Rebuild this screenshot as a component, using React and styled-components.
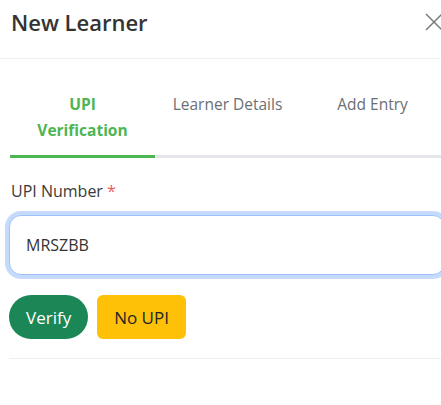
import React from "react";
import styled, { createGlobalStyle } from "styled-components";

const Global = createGlobalStyle`
  html, body { margin: 0; padding: 0; background: #fff; overflow: hidden; }
  body { font-family: "Open Sans", "Noto Sans", sans-serif; color: #333; }
  * { box-sizing: border-box; }
`;

const Modal = styled.div`
  width: 455px;
  background: #fff;
`;

const Header = styled.div`
  display: flex;
  align-items: flex-start;
  justify-content: space-between;
  height: 59px;
  padding: 7px 12px 0 11px;
  border-bottom: 1px solid #f1f1f1;
`;

const Title = styled.h1`
  margin: 0;
  font-size: 22px;
  line-height: 30px;
  font-weight: 600;
  color: #333;
`;

const Close = styled.button`
  display: flex;
  align-items: center;
  justify-content: center;
  width: 18px;
  height: 18px;
  margin-top: 6px;
  padding: 0;
  border: 0;
  background: transparent;
  color: #7a7a7a;
`;

const Body = styled.div`
  padding: 0 10px 0 9px;
`;

const Tabs = styled.div`
  display: flex;
  align-items: flex-start;
  margin-top: 32px;
  margin-left: 1px;
  border-bottom: 3px solid #e4e6ea;
`;

const Tab = styled.div`
  flex: 1;
  text-align: center;
  font-size: 15.5px;
  line-height: 26px;
  font-weight: ${(p) => (p.$active ? 700 : 400)};
  color: ${(p) => (p.$active ? "#4db552" : "#6b6f75")};
  padding-bottom: 12px;
  margin-bottom: -3px;
  border-bottom: 3px solid ${(p) => (p.$active ? "#4db552" : "transparent")};
`;

const Label = styled.label`
  display: block;
  margin-top: 21px;
  padding-left: 2px;
  font-size: 16px;
  line-height: 24px;
  color: #3a3a3a;
`;

const Req = styled.span`
  color: #ef5a5a;
`;

const Input = styled.input`
  display: block;
  width: 100%;
  height: 60px;
  margin-top: 12px;
  padding: 0 16px;
  font-family: "Open Sans", "Noto Sans", sans-serif;
  font-size: 16px;
  color: #333;
  border: 1px solid #9cc3fb;
  border-radius: 12px;
  box-shadow: 0 0 0 4px #c6dbfc;
  outline: none;
  background: #fff;
`;

const Actions = styled.div`
  display: flex;
  gap: 9px;
  margin-top: 20px;
  padding-bottom: 19px;
  border-bottom: 1px solid #f0f0f0;
`;

const Button = styled.button`
  height: 44px;
  padding: 0 17px;
  border: 0;
  font-family: "Open Sans", "Noto Sans", sans-serif;
  font-size: 17px;
  border-radius: ${(p) => (p.$pill ? "22px" : "6px")};
  background: ${(p) => p.$bg};
  color: ${(p) => p.$fg};
`;

export default function App() {
  return (
    <>
      <Global />
      <Modal>
        <Header>
          <Title>New Learner</Title>
          <Close aria-label="Close">
            <svg width="18" height="18" viewBox="0 0 18 18" fill="none" stroke="currentColor" strokeWidth="1.5">
              <path d="M1 1L17 17M17 1L1 17" />
            </svg>
          </Close>
        </Header>
        <Body>
          <Tabs>
            <Tab $active>UPI<br />Verification</Tab>
            <Tab>Learner Details</Tab>
            <Tab>Add Entry</Tab>
          </Tabs>
          <Label>
            UPI Number <Req>*</Req>
          </Label>
          <Input defaultValue="MRSZBB" />
          <Actions>
            <Button $pill $bg="#1c8756" $fg="#fff">Verify</Button>
            <Button $bg="#ffc107" $fg="#212529">No UPI</Button>
          </Actions>
        </Body>
      </Modal>
    </>
  );
}
